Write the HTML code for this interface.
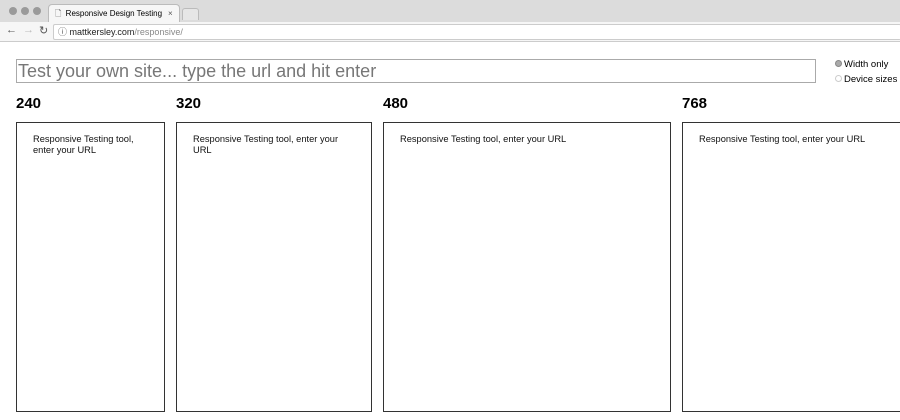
<!DOCTYPE html>
<html><head><style>
body{margin:0;width:900px;height:420px;overflow:hidden;background:#fff;font-family:"Liberation Sans",Arial,sans-serif;position:relative}
.abs{position:absolute}
.frame{position:absolute;top:122px;height:290px;border:1px solid #333;box-sizing:border-box;font-size:9.3px;line-height:11px;color:#111;padding:11px 16px}
.lbl{position:absolute;top:95px;font-weight:bold;font-size:15px}
</style></head><body>
<div class="abs" style="left:0;top:0;width:900px;height:22px;background:#dcdcdc"></div>
<div class="abs" style="left:9px;top:7px;width:8px;height:8px;border-radius:50%;background:#9a9a9a"></div>
<div class="abs" style="left:21px;top:7px;width:8px;height:8px;border-radius:50%;background:#9a9a9a"></div>
<div class="abs" style="left:33px;top:7px;width:8px;height:8px;border-radius:50%;background:#9a9a9a"></div>
<div class="abs" style="left:48px;top:4px;width:130px;height:18px;background:#f6f6f6;border:1px solid #bbb;border-bottom:none;border-radius:4px 4px 0 0;font-size:8px;line-height:18px"><span style="margin-left:6px;color:#555">🗋</span> <span style="margin-left:2px">Responsive Design Testing</span><span style="position:absolute;left:119px;color:#555">×</span></div>
<div class="abs" style="left:182px;top:8px;width:15px;height:11px;background:#e6e6e6;border:1px solid #bbb;border-bottom:none;border-radius:3px 3px 0 0"></div>
<div class="abs" style="left:0;top:22px;width:900px;height:19px;background:#f6f6f6;border-bottom:1px solid #ccc"></div>
<div class="abs" style="left:6px;top:24px;font-size:11px;color:#555">←</div>
<div class="abs" style="left:23px;top:24px;font-size:11px;color:#bbb">→</div>
<div class="abs" style="left:39px;top:24px;font-size:11px;color:#555">↻</div>
<div class="abs" style="left:53px;top:24px;width:847px;height:14px;background:#fff;border:1px solid #ccc;border-right:none;border-radius:2px;font-size:9px;line-height:14px"><span style="margin-left:4px;color:#555">ⓘ</span> <span style="color:#222">mattkersley.com</span><span style="color:#888">/responsive/</span></div>
<div class="abs" style="left:16px;top:59px;width:800px;height:24px;border:1px solid #aaa;box-sizing:border-box;font-size:18px;line-height:23px;color:#777;padding-left:1px">Test your own site... type the url and hit enter</div>
<div class="abs" style="left:835px;top:60px;width:7px;height:7px;border-radius:50%;border:1px solid #888;background:#aaa;box-sizing:border-box"></div>
<div class="abs" style="left:844px;top:59px;font-size:9.5px">Width only</div>
<div class="abs" style="left:835px;top:75px;width:7px;height:7px;border-radius:50%;border:1px solid #ccc;box-sizing:border-box"></div>
<div class="abs" style="left:844px;top:74px;font-size:9.5px">Device sizes</div>
<div class="lbl" style="left:16px">240</div>
<div class="lbl" style="left:176px">320</div>
<div class="lbl" style="left:383px">480</div>
<div class="lbl" style="left:682px">768</div>
<div class="frame" style="left:16px;width:149px">Responsive Testing tool, enter your URL</div>
<div class="frame" style="left:176px;width:196px">Responsive Testing tool, enter your URL</div>
<div class="frame" style="left:383px;width:288px">Responsive Testing tool, enter your URL</div>
<div class="frame" style="left:682px;width:240px">Responsive Testing tool, enter your URL</div>
</body></html>
